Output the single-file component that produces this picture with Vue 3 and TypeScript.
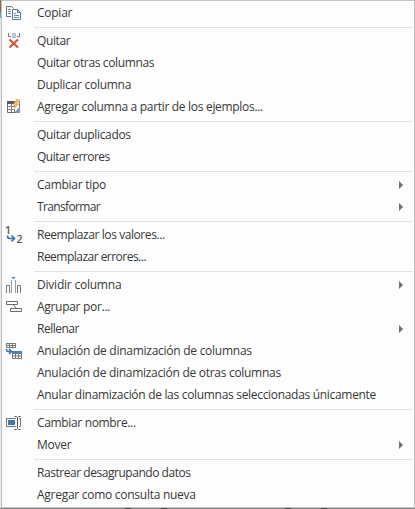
<script setup lang="ts">
interface Item {
  label: string
  tracking: number
  icon?: string
  sub?: boolean
}

const groups: Item[][] = [
  [{ label: 'Copiar', tracking: -0.25, icon: 'copy' }],
  [
    { label: 'Quitar', tracking: -0.4, icon: 'remove' },
    { label: 'Quitar otras columnas', tracking: -0.37 },
    { label: 'Duplicar columna', tracking: -0.27 },
    { label: 'Agregar columna a partir de los ejemplos...', tracking: -0.31, icon: 'example' },
  ],
  [
    { label: 'Quitar duplicados', tracking: -0.34 },
    { label: 'Quitar errores', tracking: -0.5 },
  ],
  [
    { label: 'Cambiar tipo', tracking: -0.27, sub: true },
    { label: 'Transformar', tracking: -0.65, sub: true },
  ],
  [
    { label: 'Reemplazar los valores...', tracking: -0.42, icon: 'replace' },
    { label: 'Reemplazar errores...', tracking: -0.52 },
  ],
  [
    { label: 'Dividir columna', tracking: -0.22, icon: 'split', sub: true },
    { label: 'Agrupar por...', tracking: -0.3, icon: 'group' },
    { label: 'Rellenar', tracking: -0.5, sub: true },
    { label: 'Anulación de dinamización de columnas', tracking: -0.26, icon: 'unpivot' },
    { label: 'Anulación de dinamización de otras columnas', tracking: -0.29 },
    { label: 'Anular dinamización de las columnas seleccionadas únicamente', tracking: -0.31 },
  ],
  [
    { label: 'Cambiar nombre...', tracking: -0.34, icon: 'rename' },
    { label: 'Mover', tracking: -0.25, sub: true },
  ],
  [
    { label: 'Rastrear desagrupando datos', tracking: -0.46 },
    { label: 'Agregar como consulta nueva', tracking: -0.27 },
  ],
]
</script>

<template>
  <div class="screen">
    <div class="edge"><i class="tile"></i><i class="teal"></i></div>
    <div class="menu" role="menu">
      <div v-for="(group, g) in groups" :key="g" class="group">
        <div v-for="item in group" :key="item.label" class="row" role="menuitem">
          <span class="icon">
            <svg v-if="item.icon" width="18" height="20" viewBox="0 0 18 20" fill="none">
              <g v-if="item.icon === 'copy'" stroke="#68727c">
                <path d="M6 13.500H1.500V3.500H6.500L8.500 5.500" />
                <path d="M3 6.500H6M3 8.500H6M3 10.500H6" stroke="#5b91b5" />
                <path d="M7.500 6.500H12.500L15.500 9.500V16.500H7.500ZM12.500 6.500V9.500H15.500" fill="#fff" />
                <path d="M9 10.500H11M9 12.500H14M9 14.500H14" stroke="#5b91b5" />
              </g>
              <g v-else-if="item.icon === 'remove'">
                <path d="M3.500 2V5.500H6M14.500 2V5.500H12" stroke="#777" />
                <path d="M7 2H11V7H7Z" fill="#b5c5d2" />
                <path d="M4.500 8.500L13 16.500M13 8.500L4.500 16.500" stroke="#d3573d" stroke-width="2.300" />
              </g>
              <g v-else-if="item.icon === 'example'">
                <path d="M2.500 4.500H14.500V15.500H2.500Z" fill="#fff" stroke="#666d76" />
                <path d="M3 9.500H10M3 12.500H10M6.500 7V15M9.500 7V15" stroke="#7f858c" />
                <path d="M2 4H10V7H2Z" fill="#5b5960" />
                <path d="M10 15L15 9V16H10Z" fill="#7c98b5" />
                <path d="M11 2H15L12.800 6H15.500L8 13.500L10 8.500H8Z" fill="#e8bf6c" />
              </g>
              <g v-else-if="item.icon === 'replace'">
                <text x="0" y="9" class="digit">1</text>
                <text x="11.500" y="18" class="digit">2</text>
                <path d="M2.500 10.500V11Q2.500 13.500 5 13.500H9M6.500 10.500L9.500 13.500L6.500 16.500" stroke="#3e72aa" stroke-width="1.700" />
              </g>
              <g v-else-if="item.icon === 'split'">
                <path d="M1.500 18V10.500H4.500V18M12.500 10.500H15.500V18M12.500 10.500V18" stroke="#777" />
                <path d="M6.500 18V5M10.500 18V5" stroke="#999" />
                <path d="M6.500 2H10.500L8.500 4.200Z" fill="#3e80b8" />
              </g>
              <g v-else-if="item.icon === 'group'" stroke="#6b6b6b">
                <path d="M1.500 4.500H12.500V7.500H1.500ZM5.500 11.500H16.500V14.500H5.500ZM8 7.500L11.500 11.500" />
              </g>
              <g v-else-if="item.icon === 'unpivot'">
                <path d="M1.500 2.500H10.500V6.500H1.500ZM1.500 4.500H10.500M4.500 2.500V6.500M7.500 2.500V6.500" stroke="#777" />
                <path d="M7.500 10.500H16.500V17.500H7.500Z" fill="#fff" stroke="#777" />
                <path d="M8 15H16M10.500 13V17M13.500 13V17" stroke="#777" />
                <path d="M7 10H17V13H7Z" fill="#4f82af" />
                <path d="M1.500 8V9Q1.500 10.500 3 10.500H6M4 8L6.500 10.500L4 13" stroke="#3e72aa" stroke-width="1.500" />
              </g>
              <g v-else>
                <path d="M11 5.500H1.500V13.500H11M14 5.500H15.500V13.500H14" stroke="#777" />
                <path d="M3 7H10V12H3Z" fill="#3f7baa" />
                <path d="M9.500 3.500H11.500L12.500 4.500L13.500 3.500H15.500M12.500 4V15M9.500 16.500H11.500L12.500 15.500L13.500 16.500H15.500" stroke="#555" />
              </g>
            </svg>
          </span>
          <span class="label" :style="{ letterSpacing: item.tracking + 'px' }">{{ item.label }}</span>
          <svg v-if="item.sub" class="arrow" width="4" height="8" viewBox="0 0 4 8"><path d="M0 0L4 4L0 8Z" fill="#6e6e6e" /></svg>
        </div>
      </div>
    </div>
    <div class="below"><i></i><i></i><i></i><i></i></div>
  </div>
</template>

<style>
body { background: #fff; overflow: hidden; }
</style>

<style scoped>
.screen {
  box-sizing: border-box;
  width: 415px;
  height: 509px;
  display: grid;
  grid-template-columns: 1px 414px;
  grid-template-rows: 508px 1px;
  background: #e9e9e9;
}
.edge { display: flex; flex-direction: column; }
.tile { height: 12px; background: #8e6a3c; }
.teal { height: 6px; background: #58b5a5; }
.menu {
  box-sizing: border-box;
  border: 1px solid #c2c2c2;
  padding-top: 1px;
  background: #fdfdfd;
}
.group + .group::before {
  content: "";
  display: block;
  height: 1px;
  margin: 3px 1px 2px 32px;
  background: #e3e3e3;
}
.row {
  display: flex;
  align-items: center;
  height: 22px;
  font: 12px/22px "Open Sans", "Noto Sans", sans-serif;
  color: #383838;
}
.icon { width: 35px; height: 20px; flex: none; padding-left: 3px; box-sizing: border-box; }
.icon svg { display: block; overflow: visible; }
.digit { font: 600 10.5px "Open Sans", sans-serif; fill: #555; }
.label { flex: 1; white-space: nowrap; }
.arrow { margin-right: 11px; }
.below { grid-column: 1 / 3; background: #858585; display: flex; gap: 30px; padding-left: 125px; }
.below i { width: 6px; background: #444; }
.below i:nth-child(3) { margin-left: 88px; }
</style>
